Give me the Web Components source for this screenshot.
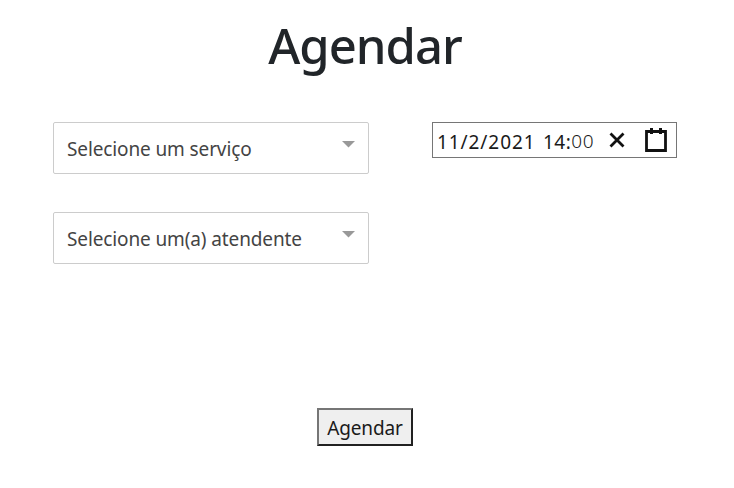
<!DOCTYPE html>
<html lang="pt-BR">
<head>
<meta charset="utf-8">
<title>Agendar</title>
<style>
html,body{margin:0;background:#fff}
body{font-family:"Noto Sans","Open Sans",sans-serif;color:#212529}
</style>
</head>
<body>
<schedule-page></schedule-page>
<script>
const define = (name, html) => customElements.define(name, class extends HTMLElement {
  constructor() {
    super();
    this.attachShadow({ mode: 'open' }).innerHTML = html;
  }
});

define('page-title', `
<style>
:host{display:block;text-align:center}
h1{margin:0;font-size:49px;line-height:60px;font-weight:500;letter-spacing:-1px;color:#212529}
</style>
<h1><slot></slot></h1>`);

define('select-field', `
<style>
:host{display:flex;box-sizing:border-box;width:316px;height:52px;padding:0 13px;border:1px solid #ccc;border-radius:2px;align-items:center;justify-content:space-between;color:#444;font-size:19px;line-height:28px}
.label{white-space:nowrap;letter-spacing:-.12px;padding-top:2px}
svg{display:block;width:13px;height:7px;margin-bottom:8px}
</style>
<span class="label"><slot></slot></span>
<svg viewBox="0 0 13 7"><path d="M0 0H13L6.5 6.5Z" fill="#999"/></svg>`);

define('date-time-field', `
<style>
:host{display:flex;box-sizing:border-box;width:245px;height:36px;border:1px solid #767676;padding:0 9px 0 4px;align-items:center;color:#1a1a1a;font-size:19px;line-height:28px;white-space:pre}
.date{width:106px;padding-top:4px;letter-spacing:.92px}
.time{width:66px;padding-top:4px;letter-spacing:.5px}
.minutes{position:relative;top:-1px;font-weight:300}
.clear{width:16px;height:16px;margin-right:20px}
.calendar{width:22px;height:24px;margin-bottom:1px}
svg{display:block;flex:none}
</style>
<span class="date">11/2/2021</span><span class="time">14:<span class="minutes">00</span></span>
<svg class="clear" viewBox="0 0 16 16"><path d="M1.5 1.5L14.5 14.5M14.5 1.5L1.5 14.5" stroke="#111" stroke-width="2.8"/></svg>
<svg class="calendar" viewBox="0 0 22 24"><path d="M1.5 3.5H20.5V22.5H1.5Z" fill="none" stroke="#111" stroke-width="2.8"/><path d="M6.5 0V6M15.5 0V6" stroke="#111" stroke-width="3"/></svg>`);

define('submit-button', `
<style>
:host{display:block;width:96px}
button{display:block;box-sizing:border-box;width:96px;height:38px;padding:0;border:2px solid;border-color:#767676 #212121 #212121 #767676;border-radius:0;background:#efefef;color:#1a1a1a;font:19px/30px "Noto Sans","Open Sans",sans-serif;letter-spacing:-.15px;padding-top:1px}
</style>
<button type="button"><slot></slot></button>`);

define('schedule-page', `
<style>
:host{display:flex;flex-direction:column;align-items:center;box-sizing:border-box;width:734px;height:488px;padding:15px 4px 0 0}
.fields{display:grid;grid-template-columns:316px 245px;column-gap:63px;row-gap:38px;align-items:start;margin-top:47px;width:624px}
submit-button{margin-top:144px}
</style>
<page-title>Agendar</page-title>
<section class="fields">
<select-field>Selecione um serviço</select-field>
<date-time-field></date-time-field>
<select-field>Selecione um(a) atendente</select-field>
</section>
<submit-button>Agendar</submit-button>`);
</script>
</body>
</html>
